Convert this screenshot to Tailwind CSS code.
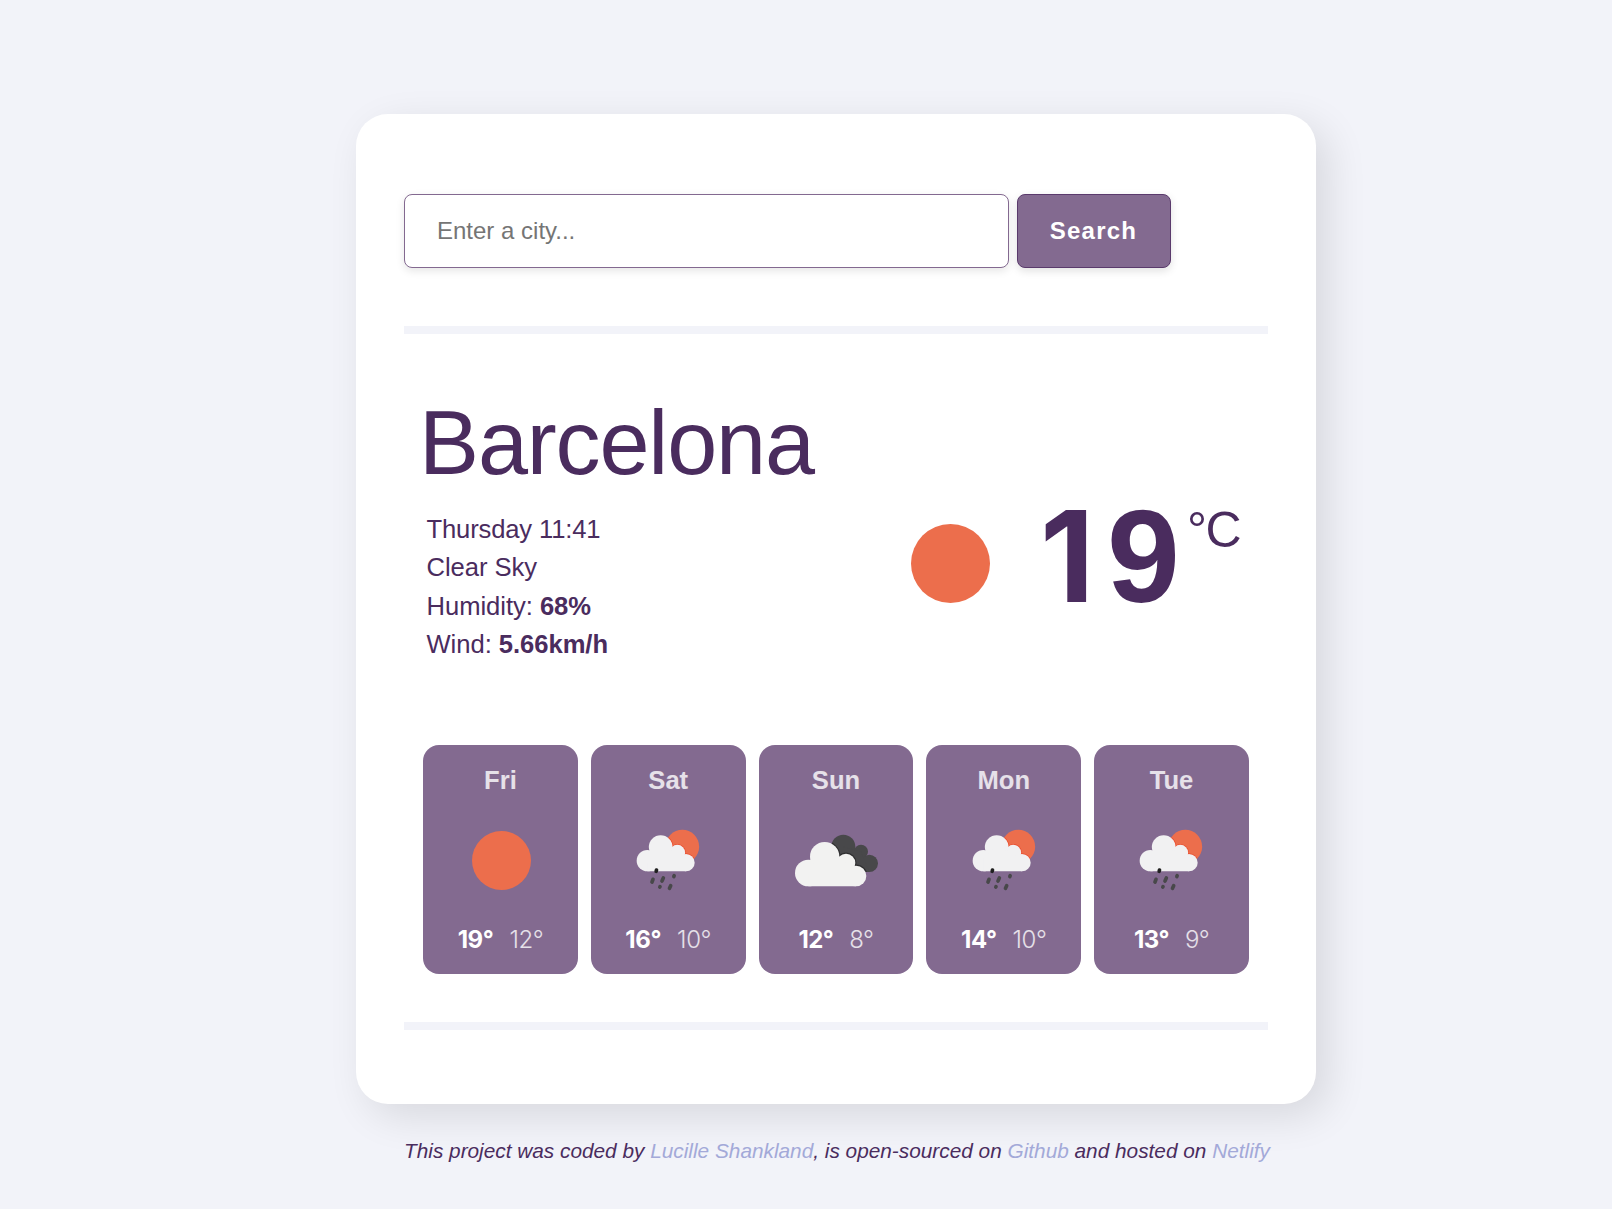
<!DOCTYPE html>
<html lang="en">
<head>
<meta charset="utf-8">
<title>Weather</title>
<script src="https://cdn.jsdelivr.net/npm/@tailwindcss/browser@4"></script>
</head>
<body class="min-h-[1209px] overflow-hidden bg-[#f2f3f9] font-['Liberation_Sans',Arial,sans-serif] text-[#4a2c5e]">
<svg class="absolute size-0">
  <defs>
    <clipPath id="sunClip"><circle cx="172" cy="80" r="50.5"/></clipPath>
    <g id="darkCloud"><circle cx="175" cy="80" r="36"/><circle cx="228" cy="95" r="21"/><circle cx="253" cy="130" r="26"/><path d="M175 80L228 95L253 156H190z"/></g>
    <clipPath id="darkClip"><circle cx="175" cy="80" r="36"/><circle cx="228" cy="95" r="21"/><circle cx="253" cy="130" r="26"/><path d="M175 80L228 95L253 156H190z"/></clipPath>
    <g id="rainCloud"><circle cx="67" cy="122" r="32"/><circle cx="107" cy="81" r="35.5"/><circle cx="157" cy="98" r="23.5"/><circle cx="183" cy="128" r="26"/><path d="M67 154V110L107 81L157 98L183 128V154z"/></g>
    <g id="bigCloud"><circle cx="70" cy="159" r="40"/><circle cx="119" cy="110" r="44"/><circle cx="183" cy="129" r="28"/><circle cx="213" cy="168" r="31"/><path d="M70 199V140L119 110L183 129L213 168V199z"/></g>
    <symbol id="rain" viewBox="0 0 270 240">
      <circle cx="172" cy="80" r="50.5" fill="#ec6e4c"/>
      <g clip-path="url(#sunClip)"><use href="#rainCloud" fill="none" stroke="#ea5030" stroke-width="5"/></g>
      <use href="#rainCloud" fill="#f1f1f2"/>
      <g stroke="#48484a" stroke-width="11" stroke-linecap="round">
        <path d="M84 178l-3 8M115 174l-4 9M147.500 167l-1 2.500M105 200l-.5 1M137 197l-3.500 8"/>
        <path d="M94.500 150l-1 4" stroke="#202020"/>
      </g>
    </symbol>
    <symbol id="clouds" viewBox="0 0 300 240">
      <use href="#darkCloud" fill="#48484a"/>
      <g clip-path="url(#darkClip)"><use href="#bigCloud" fill="none" stroke="#2f2f30" stroke-width="7"/></g>
      <use href="#bigCloud" fill="#f2f2f1"/>
    </symbol>
    <symbol id="sun" viewBox="0 0 100 100"><circle cx="50" cy="50" r="50" fill="#ec6e4c"/></symbol>
  </defs>
</svg>

<div class="ml-[356px] w-[960px] pt-[114px]">
  <main class="h-[990px] rounded-[32px] bg-white px-12 pt-20 shadow-[12px_12px_40px_rgba(0,0,0,0.11)]">
    <form class="flex h-[74px] gap-2">
      <input type="text" placeholder="Enter a city..." class="w-[605px] rounded-lg border border-[#836990] bg-white px-8 text-2xl shadow-[0_3px_8px_rgba(0,0,0,0.1)] placeholder:text-[#757575]">
      <button type="button" class="w-[154px] rounded-lg border border-[#5a3a6c] bg-[#836a90] pr-px text-2xl font-bold tracking-[1.2px] text-white shadow-[0_3px_8px_rgba(0,0,0,0.12)]">Search</button>
    </form>
    <div class="mt-[58px] h-2 bg-[#f2f3f9]"></div>

    <section class="px-[19px]">
      <h1 class="-ml-1 mt-[58px] h-[102px] text-[90px] leading-[102px] tracking-[-1.15px]">Barcelona</h1>
      <div class="mt-4 flex h-[154px] justify-between">
        <ul class="ml-[3.500px] text-[25.6px] leading-[38.4px] tracking-[-0.04px]">
          <li class="tracking-[-0.15px]">Thursday 11:41</li>
          <li>Clear Sky</li>
          <li>Humidity: <strong>68%</strong></li>
          <li>Wind: <strong>5.66km/h</strong></li>
        </ul>
        <div class="mr-[10px] flex items-start">
          <svg class="mr-[49px] mt-[14px] size-[79px]"><use href="#sun"/></svg>
          <strong class="-mt-[18px] flex w-[148px] items-baseline text-[131px] leading-[128px]"><span class="w-[68px] pl-px font-['Inter',sans-serif] text-[126px]">1</span><span>9</span></strong>
          <span class="-mt-[5px] w-[52px] text-[50px] leading-[50px] tracking-[-1.5px]">°C</span>
        </div>
      </div>
      <div class="mt-[81px] grid grid-cols-5 gap-[12.8px] text-center">
        <article class="flex h-[229px] flex-col items-center rounded-2xl bg-[#836a90]">
          <h2 class="mt-5 text-[25.6px] font-bold leading-[30px] text-white/80">Fri</h2>
          <div class="mt-[25px] flex h-20 items-center pl-0.5"><svg class="size-[59px]"><use href="#sun"/></svg></div>
          <p class="mt-[22px] flex gap-[16px] font-['Inter',sans-serif] text-[24px] leading-9 tracking-[-0.4px] text-white"><strong>19°</strong><span class="font-light text-white/80">12°</span></p>
        </article>
        <article class="flex h-[229px] flex-col items-center rounded-2xl bg-[#836a90]">
          <h2 class="mt-5 text-[25.6px] font-bold leading-[30px] text-white/80">Sat</h2>
          <div class="mt-[25px] flex h-20 items-center pl-[3px]"><svg class="h-[80px] w-[90px]"><use href="#rain"/></svg></div>
          <p class="mt-[22px] flex gap-[16px] font-['Inter',sans-serif] text-[24px] leading-9 tracking-[-0.4px] text-white"><strong>16°</strong><span class="font-light text-white/80">10°</span></p>
        </article>
        <article class="flex h-[229px] flex-col items-center rounded-2xl bg-[#836a90]">
          <h2 class="mt-5 text-[25.6px] font-bold leading-[30px] text-white/80">Sun</h2>
          <div class="mt-[25px] flex h-20 items-center pr-px"><svg class="h-[80px] w-[100px]"><use href="#clouds"/></svg></div>
          <p class="mt-[22px] flex gap-[16px] font-['Inter',sans-serif] text-[24px] leading-9 tracking-[-0.6px] text-white"><strong>12°</strong><span class="font-light text-white/80">8°</span></p>
        </article>
        <article class="flex h-[229px] flex-col items-center rounded-2xl bg-[#836a90]">
          <h2 class="mt-5 text-[25.6px] font-bold leading-[30px] text-white/80">Mon</h2>
          <div class="mt-[25px] flex h-20 items-center pl-[5px]"><svg class="h-[80px] w-[90px]"><use href="#rain"/></svg></div>
          <p class="mt-[22px] flex gap-[16px] font-['Inter',sans-serif] text-[24px] leading-9 tracking-[-0.4px] text-white"><strong>14°</strong><span class="font-light text-white/80">10°</span></p>
        </article>
        <article class="flex h-[229px] flex-col items-center rounded-2xl bg-[#836a90]">
          <h2 class="mt-5 text-[25.6px] font-bold leading-[30px] text-white/80">Tue</h2>
          <div class="mt-[25px] flex h-20 items-center pl-[3px]"><svg class="h-[80px] w-[90px]"><use href="#rain"/></svg></div>
          <p class="mt-[22px] flex gap-[16px] font-['Inter',sans-serif] text-[24px] leading-9 tracking-[-0.6px] text-white"><strong>13°</strong><span class="font-light text-white/80">9°</span></p>
        </article>
      </div>
    </section>
    <div class="mt-12 h-2 bg-[#f2f3f9]"></div>
  </main>
  <footer class="mt-[35px] whitespace-nowrap pl-12 text-[20.8px] italic leading-6">This project was coded by <a class="text-[#a3a9d8]">Lucille Shankland</a>, is open-sourced on <a class="text-[#a3a9d8]">Github</a> and hosted on <a class="text-[#a3a9d8]">Netlify</a></footer>
</div>
</body>
</html>
